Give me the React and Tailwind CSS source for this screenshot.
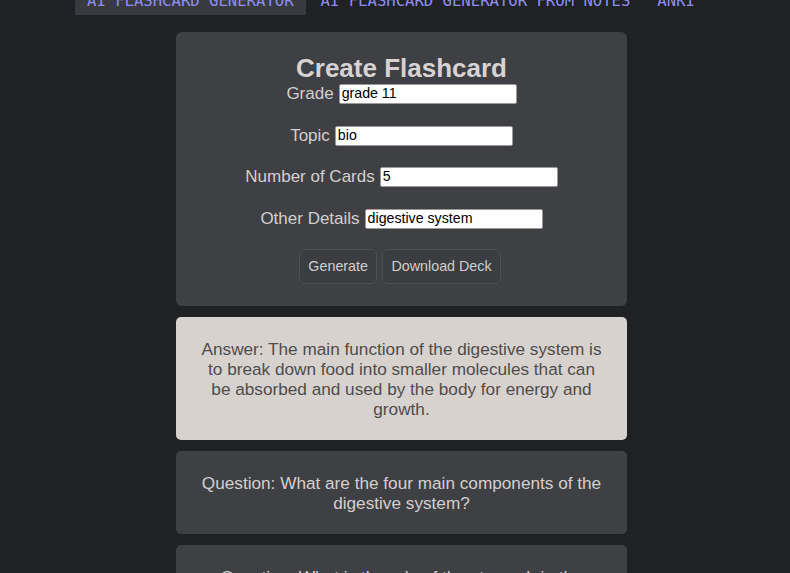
import React from "react";

const navItems = [
  { label: "AI FLASHCARD GENERATOR", active: true },
  { label: "AI FLASHCARD GENERATOR FROM NOTES", active: false },
  { label: "ANKI", active: false },
];

const fields = [
  { label: "Grade", value: "grade 11" },
  { label: "Topic", value: "bio" },
  { label: "Number of Cards", value: "5" },
  { label: "Other Details", value: "digestive system" },
];

const cards = [
  {
    text: "Answer: The main function of the digestive system is to break down food into smaller molecules that can be absorbed and used by the body for energy and growth.",
    flipped: true,
  },
  {
    text: "Question: What are the four main components of the digestive system?",
    flipped: false,
  },
  {
    text: "Question: What is the role of the stomach in the digestive process?",
    flipped: false,
  },
];

const App = () => {
  return (
    <div className="min-h-screen bg-[#202124] overflow-hidden font-['Liberation_Sans',Arial,sans-serif]">
      {/* nav, page is scrolled a little */}
      <nav className="-mt-[13px] flex gap-[3px] pl-[75px] font-['DejaVu_Sans_Mono',monospace] text-[15.6px] text-[#8d8ff0]">
        {navItems.map((item) => (
          <a
            key={item.label}
            className={`block px-[12px] py-[5px] leading-[18px] ${
              item.active ? "bg-[#393a3f]" : ""
            }`}
          >
            {item.label}
          </a>
        ))}
      </nav>

      <div className="ml-[176px] mt-[17px] w-[451px] flex flex-col gap-[11px] pb-10">
        <div className="bg-[#3f4044] rounded-md pt-[21px] pb-[22px] flex flex-col items-center text-[#d4cfcf]">
          <h2 className="text-[26px] leading-[30px] font-bold text-[#d8d3d3]">
            Create Flashcard
          </h2>
          <div className="mt-[1px] flex flex-col items-center gap-[21.5px]">
            {fields.map((f) => (
              <div key={f.label} className="h-[20px] flex items-center gap-[5px]">
                <label className="text-[17px] leading-[20px]">{f.label}</label>
                <input
                  defaultValue={f.value}
                  className="w-[178px] h-[20px] bg-white text-black text-[14.2px] px-[2px] border border-[#9a9a9a] rounded-[2px] outline-none"
                />
              </div>
            ))}
          </div>
          <div className="mt-[20.5px] flex gap-[4.5px] pr-[3px]">
            <button className="h-[35px] px-[8.5px] rounded-md border border-[#4e4f54] bg-[#3c3d41] text-[14.3px] text-[#d2cdcd]">
              Generate
            </button>
            <button className="h-[35px] px-[8.5px] rounded-md border border-[#4e4f54] bg-[#3c3d41] text-[14.3px] text-[#d2cdcd]">
              Download Deck
            </button>
          </div>
        </div>

        {cards.map((card, i) => (
          <div
            key={i}
            className={`rounded-[5px] px-[22px] pt-[22px] pb-[21px] text-center text-[17.2px] leading-[20px] ${
              card.flipped
                ? "bg-[#d8d2cf] text-[#4f4c4c]"
                : "bg-[#3f4044] text-[#d4cfcf]"
            }`}
          >
            {card.text}
          </div>
        ))}
      </div>
    </div>
  );
};

export default App;
